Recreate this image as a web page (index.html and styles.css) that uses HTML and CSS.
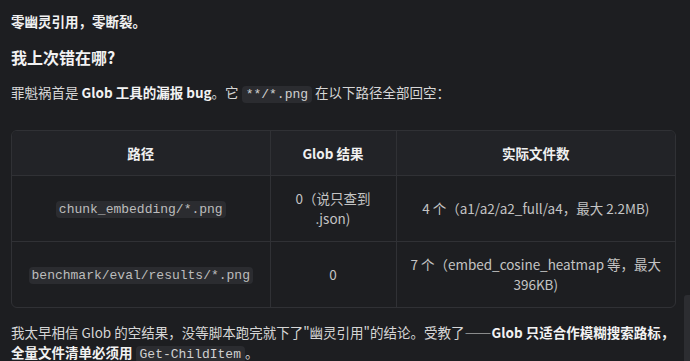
FILE: index.html
```html
<!DOCTYPE html>
<html lang="zh-CN">
<head>
<meta charset="utf-8">
<link rel="stylesheet" href="styles.css">
</head>
<body>
<div class="page">
  <p class="lead"><strong>零幽灵引用，零断裂。</strong></p>
  <h3 class="title">我上次错在哪?</h3>
  <p class="para">罪魁祸首是 <strong>Glob 工具的漏报 bug</strong>。它 <code class="code">**/*.png</code> 在以下路径全部回空：</p>
  <div class="table-wrap">
    <table class="tbl">
      <colgroup>
        <col class="c1"><col class="c2"><col class="c3">
      </colgroup>
      <thead>
        <tr><th>路径</th><th>Glob 结果</th><th>实际文件数</th></tr>
      </thead>
      <tbody>
        <tr>
          <td><code class="code">chunk_embedding/*.png</code></td>
          <td>0（说只查到 .json)</td>
          <td>4 个（a1/a2/a2_full/a4，最大 2.2MB)</td>
        </tr>
        <tr>
          <td><code class="code">benchmark/eval/results/*.png</code></td>
          <td>0</td>
          <td>7 个（embed_cosine_heatmap 等，最大 396KB)</td>
        </tr>
      </tbody>
    </table>
  </div>
  <p class="para last">我太早相信 Glob 的空结果，没等脚本跑完就下了"幽灵引用"的结论。受教了——<strong>Glob 只适合作模糊搜索路标，全量文件清单必须用</strong> <code class="code">Get-ChildItem</code>。</p>
</div>
<div class="scroll-thumb"></div>
</body>
</html>
```
FILE: styles.css
```css
html, body {
  margin: 0;
  padding: 0;
  background: #1d1e21;
  height: 100%;
  overflow: hidden;
}
body {
  font-family: "Noto Sans CJK SC", "Noto Sans", sans-serif;
  font-size: 13.5px;
  line-height: 20px;
  color: #d6d6d6;
}
.page {
  padding: 11px 14px 0 11px;
}
strong {
  font-weight: 700;
  color: #f2f2f2;
}
.lead {
  margin: 0;
}
.title {
  margin: 14px 0 0;
  font-size: 16px;
  line-height: 24px;
  font-weight: 700;
  color: #f2f2f2;
}
.para {
  margin: 13px 0 0;
}
.code {
  font-family: "Liberation Mono", "DejaVu Sans Mono", monospace;
  font-size: 13px;
  background: #2b2c30;
  color: #d0d0d0;
  padding: 1px 4px;
  border-radius: 4px;
}
.table-wrap {
  margin-top: 25px;
  border: 1px solid #303135;
  border-radius: 6px;
  overflow: hidden;
}
.tbl {
  width: 100%;
  border-collapse: collapse;
  table-layout: fixed;
}
.c1 { width: 258px; }
.c2 { width: 126px; }
.tbl th {
  background: #222327;
  color: #f0f0f0;
  font-weight: 700;
  padding: 12px 14px 12px;
  text-align: center;
  border-bottom: 1px solid #303135;
}
.tbl td {
  color: #c4c4c4;
  padding: 12px 12px 13px;
  text-align: center;
  border-top: 1px solid #303135;
}
.tbl th + th, .tbl td + td {
  border-left: 1px solid #303135;
}
.tbl td .code {
  color: #bdbdbd;
  padding: 1px 3px;
}
.last {
  margin-top: 14px;
}
.scroll-thumb {
  position: absolute;
  right: 0;
  top: 295px;
  width: 6px;
  height: 80px;
  background: #2c2d31;
  border-radius: 3px 0 0 0;
}
```
